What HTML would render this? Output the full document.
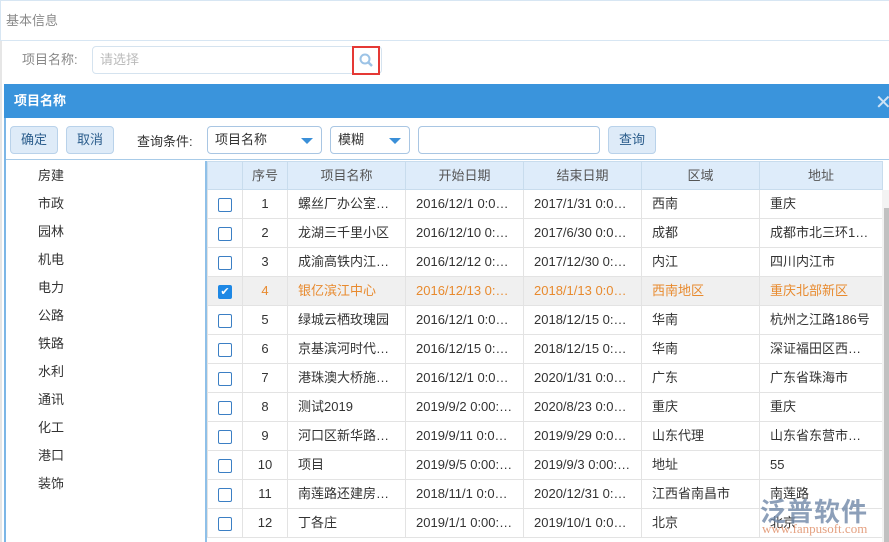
<!DOCTYPE html><html><head><meta charset="utf-8"><style>
*{box-sizing:border-box;margin:0;padding:0}
body{width:889px;height:542px;overflow:hidden;background:#fff;font-family:"Liberation Sans","Noto Sans CJK SC",sans-serif;font-size:13px;color:#333;position:relative}
.a{position:absolute}
.btn{position:absolute;top:126px;height:28px;border:1px solid #b9d2ea;border-radius:4px;background:#deebf8;color:#2b5d8c;text-align:center;line-height:26px;font-size:13px}
.sel{position:absolute;top:126px;height:28px;border:1px solid #a9c6e3;border-radius:4px;background:#fff;line-height:26px;padding-left:7px;font-size:13px}
.sel i{position:absolute;right:8px;top:11px;border-left:6px solid transparent;border-right:6px solid transparent;border-top:6px solid #3a8fd8}
table{border-collapse:collapse;position:absolute;left:207px;top:161px;table-layout:fixed}
td,th{border:1px solid #e3e3e3;height:29px;white-space:nowrap;overflow:hidden;font-size:13px;line-height:26px}
th{background:#deecfa;color:#555;font-weight:normal;border-color:#c8dced;height:28px}
td{padding-left:10px}
td.c{text-align:center;padding:0}
.cb{display:inline-block;width:14px;height:14px;border:1px solid #3b7fc4;border-radius:2px;vertical-align:middle;background:#fff}
.ck{background:#1e88e5;border-color:#1e88e5;color:#fff;font-size:11px;line-height:12px;text-align:center}
tr.s td{background:#f0f0f0;color:#e88a2e}
.tree div{height:28px;line-height:28px;padding-left:32px}
</style></head><body>
<div class="a" style="left:0;top:0;width:889px;height:41px;border:1px solid #d7e6f3;border-right:none"></div>
<div class="a" style="left:6px;top:10px;color:#888;font-size:13px">基本信息</div>
<div class="a" style="left:22px;top:49px;color:#888">项目名称:</div>
<div class="a" style="left:92px;top:46px;width:290px;height:28px;border:1px solid #d5e3ef;border-radius:4px;color:#bbb;line-height:26px;padding-left:7px">请选择</div>
<div class="a" style="left:352px;top:46px;width:28px;height:29px;border:2px solid #e53935"></div>
<svg class="a" style="left:358px;top:52px" width="16" height="16"><circle cx="7" cy="7" r="4.5" fill="none" stroke="#9cc3e6" stroke-width="2"/><line x1="10.5" y1="10.5" x2="14" y2="14" stroke="#9cc3e6" stroke-width="2.5"/></svg>
<div class="a" style="left:0;top:41px;width:2px;height:501px;background:#e6e6e6"></div>
<div class="a" style="left:4px;top:84px;width:885px;height:458px;background:#fff;border-left:2px solid #7cb6e6"></div>
<div class="a" style="left:4px;top:84px;width:885px;height:34px;background:#3a94dc;color:#fff;font-weight:bold;line-height:34px;padding-left:10px;font-size:13px">项目名称</div>
<div class="a" style="left:875px;top:90px;color:#cfe3f5;font-size:20px">✕</div>
<div class="btn" style="left:10px;width:48px">确定</div>
<div class="btn" style="left:66px;width:48px">取消</div>
<div class="a" style="left:137px;top:131px;color:#333">查询条件:</div>
<div class="sel" style="left:207px;width:115px">项目名称<i></i></div>
<div class="sel" style="left:330px;width:80px">模糊<i></i></div>
<div class="sel" style="left:418px;width:182px"></div>
<div class="btn" style="left:608px;width:48px">查询</div>
<div class="a" style="left:6px;top:159px;width:883px;height:1px;background:#a8cbe8"></div>
<div class="a" style="left:205px;top:161px;width:2px;height:381px;background:#8fc0e8"></div>
<div class="a tree" style="left:6px;top:162px;width:199px">
<div>房建</div><div>市政</div><div>园林</div><div>机电</div><div>电力</div><div>公路</div><div>铁路</div><div>水利</div><div>通讯</div><div>化工</div><div>港口</div><div>装饰</div></div>
<table>
<colgroup><col width="35"><col width="45"><col width="118"><col width="118"><col width="118"><col width="118"><col width="123"></colgroup>
<tr><th></th><th>序号</th><th>项目名称</th><th>开始日期</th><th>结束日期</th><th>区域</th><th>地址</th></tr>
<tr><td class="c"><span class="cb"></span></td><td class="c">1</td><td>螺丝厂办公室…</td><td>2016/12/1 0:0…</td><td>2017/1/31 0:0…</td><td>西南</td><td>重庆</td></tr>
<tr><td class="c"><span class="cb"></span></td><td class="c">2</td><td>龙湖三千里小区</td><td>2016/12/10 0:…</td><td>2017/6/30 0:0…</td><td>成都</td><td>成都市北三环1…</td></tr>
<tr><td class="c"><span class="cb"></span></td><td class="c">3</td><td>成渝高铁内江…</td><td>2016/12/12 0:…</td><td>2017/12/30 0:…</td><td>内江</td><td>四川内江市</td></tr>
<tr class="s"><td class="c"><span class="cb ck">✔</span></td><td class="c">4</td><td>银亿滨江中心</td><td>2016/12/13 0:…</td><td>2018/1/13 0:0…</td><td>西南地区</td><td>重庆北部新区</td></tr>
<tr><td class="c"><span class="cb"></span></td><td class="c">5</td><td>绿城云栖玫瑰园</td><td>2016/12/1 0:0…</td><td>2018/12/15 0:…</td><td>华南</td><td>杭州之江路186号</td></tr>
<tr><td class="c"><span class="cb"></span></td><td class="c">6</td><td>京基滨河时代…</td><td>2016/12/15 0:…</td><td>2018/12/15 0:…</td><td>华南</td><td>深证福田区西…</td></tr>
<tr><td class="c"><span class="cb"></span></td><td class="c">7</td><td>港珠澳大桥施…</td><td>2016/12/1 0:0…</td><td>2020/1/31 0:0…</td><td>广东</td><td>广东省珠海市</td></tr>
<tr><td class="c"><span class="cb"></span></td><td class="c">8</td><td>测试2019</td><td>2019/9/2 0:00:…</td><td>2020/8/23 0:0…</td><td>重庆</td><td>重庆</td></tr>
<tr><td class="c"><span class="cb"></span></td><td class="c">9</td><td>河口区新华路…</td><td>2019/9/11 0:0…</td><td>2019/9/29 0:0…</td><td>山东代理</td><td>山东省东营市…</td></tr>
<tr><td class="c"><span class="cb"></span></td><td class="c">10</td><td>项目</td><td>2019/9/5 0:00:…</td><td>2019/9/3 0:00:…</td><td>地址</td><td>55</td></tr>
<tr><td class="c"><span class="cb"></span></td><td class="c">11</td><td>南莲路还建房…</td><td>2018/11/1 0:0…</td><td>2020/12/31 0:…</td><td>江西省南昌市</td><td>南莲路</td></tr>
<tr><td class="c"><span class="cb"></span></td><td class="c">12</td><td>丁各庄</td><td>2019/1/1 0:00:…</td><td>2019/10/1 0:0…</td><td>北京</td><td>北京</td></tr>
</table>
<div class="a" style="left:882px;top:190px;width:7px;height:352px;background:#f3f3f3"></div>
<div class="a" style="left:884px;top:208px;width:5px;height:334px;background:#c1c1c1"></div>
<div class="a" style="left:760px;top:492px;width:130px;white-space:nowrap;color:#7088a8;font-size:26px;font-weight:bold;opacity:.8;letter-spacing:1px">泛普软件</div>
<div class="a" style="left:762px;top:521px;white-space:nowrap;color:#e0906a;font-size:13px;font-family:'Liberation Serif',serif;opacity:.85">www.fanpusoft.com</div>
</body></html>
